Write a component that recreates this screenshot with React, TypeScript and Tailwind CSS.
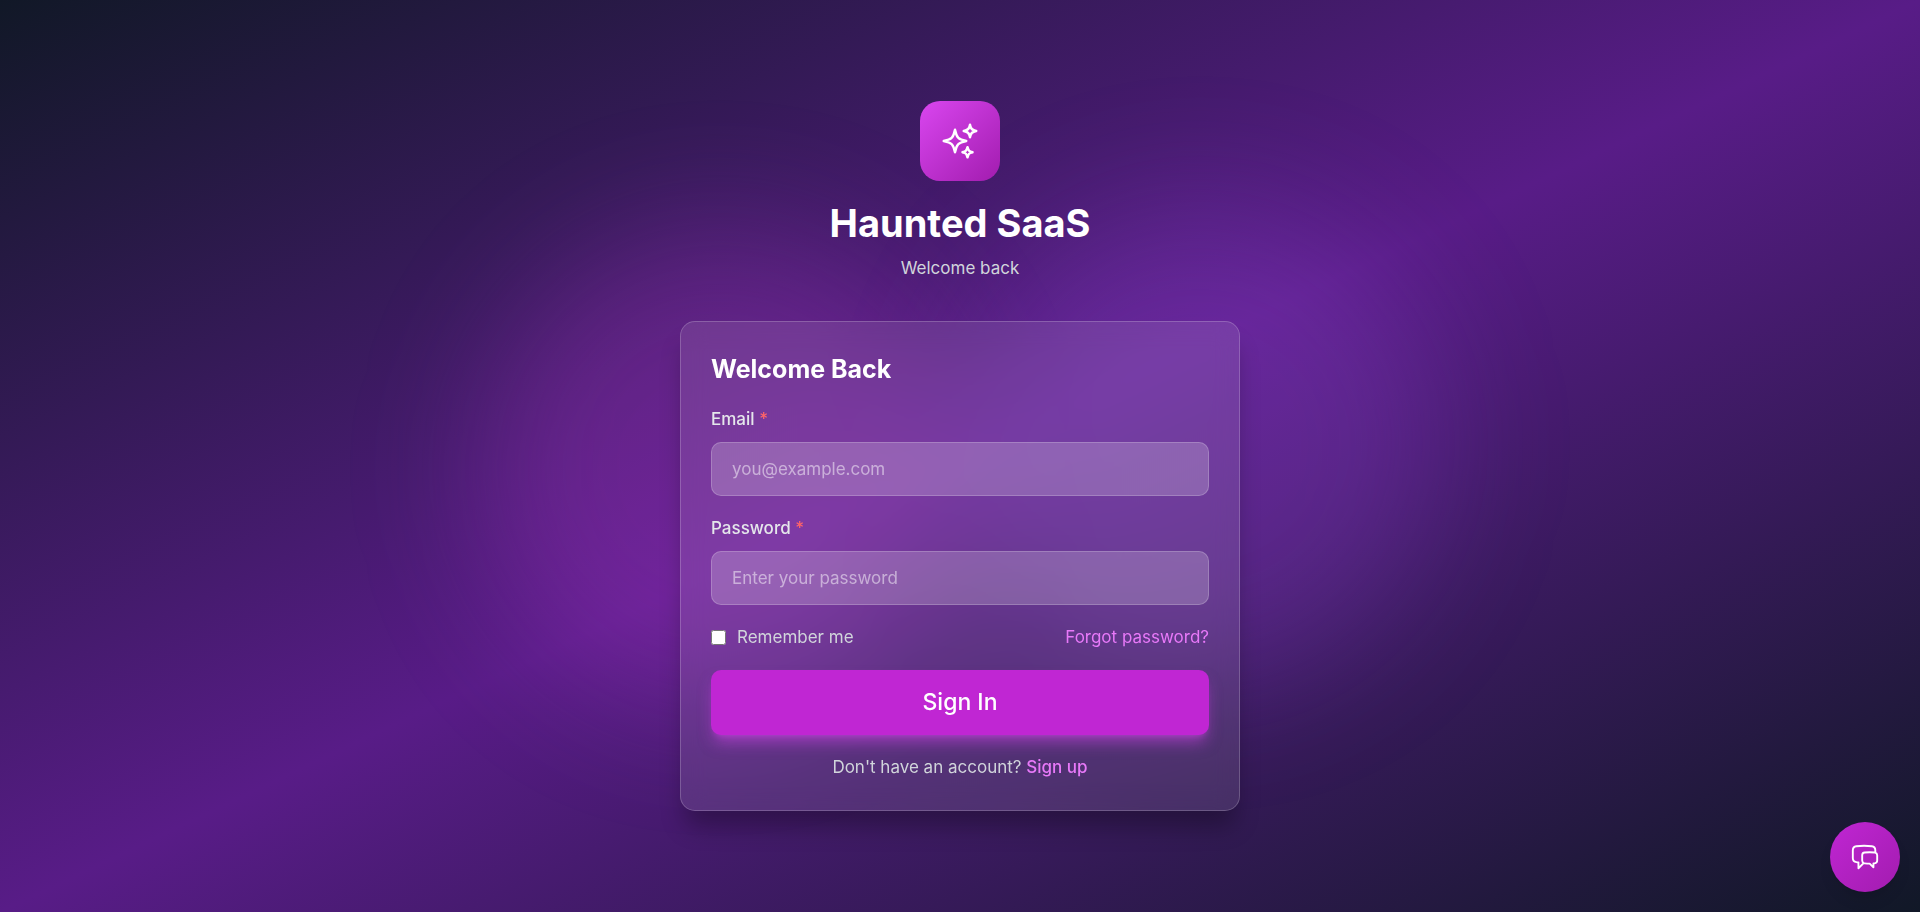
import { HiOutlineChatBubbleLeftRight, HiOutlineSparkles } from "react-icons/hi2";

type FieldProps = {
    id: string;
    label: string;
    type: string;
    placeholder: string;
};

function Field({ id, label, type, placeholder }: FieldProps) {
    return (
        <div className="flex flex-col gap-[10px]">
            <label
                htmlFor={id}
                className="text-[17px] font-medium leading-[25px] text-gray-200"
            >
                {label} <span className="text-red-400">*</span>
            </label>
            <input
                id={id}
                type={type}
                placeholder={placeholder}
                required
                className="h-[54px] w-full rounded-[10px] border border-white/20 bg-white/20 px-5 text-[17px] text-white outline-none placeholder:text-white/50"
            />
        </div>
    );
}

export default function App() {
    return (
        <main className="relative flex min-h-screen items-center justify-center overflow-hidden bg-linear-to-br/srgb from-[#111827] via-[#581c87] to-[#111827] p-5 font-['Inter',sans-serif]">
            <div className="pointer-events-none absolute inset-0">
                <div className="absolute left-1/4 top-1/4 size-[480px] rounded-full bg-[#d946ef]/20 blur-[64px]" />
                <div className="absolute bottom-1/4 right-1/4 size-[480px] rounded-full bg-[#a855f7]/20 blur-[64px]" />
            </div>

            <div className="relative w-full max-w-[560px]">
                <div className="mb-10 flex flex-col items-center text-center">
                    <div className="mb-5 flex size-20 items-center justify-center rounded-[20px] bg-linear-to-br/srgb from-[#d946ef] to-[#a21caf]">
                        <HiOutlineSparkles className="size-10 text-white" />
                    </div>
                    <h1 className="mb-[10px] text-[38px] font-bold leading-[45px] text-white">
                        Haunted SaaS
                    </h1>
                    <p className="text-[17px] leading-[25px] text-[#d1d5db]">
                        Welcome back
                    </p>
                </div>

                <div className="rounded-[15px] border border-white/20 bg-white/10 p-[30px] shadow-[0_20px_25px_-5px_rgb(0_0_0/0.3)] backdrop-blur-md">
                    <h2 className="mb-5 text-[25px] font-bold leading-[35px] text-white">
                        Welcome Back
                    </h2>
                    <form className="flex flex-col gap-5">
                        <Field
                            id="email"
                            label="Email"
                            type="email"
                            placeholder="you@example.com"
                        />
                        <Field
                            id="password"
                            label="Password"
                            type="password"
                            placeholder="Enter your password"
                        />
                        <div className="flex items-center justify-between text-[17px] leading-[25px]">
                            <label className="flex items-center text-[#d1d5db]">
                                <input
                                    type="checkbox"
                                    className="mr-[11px] size-[15px]"
                                />
                                Remember me
                            </label>
                            <a href="#forgot" className="text-[#e879f9]">
                                Forgot password?
                            </a>
                        </div>
                        <button
                            type="submit"
                            className="h-[65px] w-full rounded-[10px] bg-[#c026d3] text-[23px] font-medium text-white shadow-[0_10px_15px_-3px_rgb(217_70_239/0.5),0_4px_6px_-4px_rgb(217_70_239/0.5)]"
                        >
                            Sign In
                        </button>
                    </form>
                    <p className="mt-5 text-center text-[17px] leading-[25px] text-[#d1d5db]">
                        Don't have an account?{" "}
                        <a href="#signup" className="font-medium text-[#e879f9]">
                            Sign up
                        </a>
                    </p>
                </div>
            </div>

            <button
                type="button"
                aria-label="Open chat"
                className="fixed bottom-5 right-5 flex size-[70px] items-center justify-center rounded-full bg-linear-to-br/srgb from-[#c026d3] to-[#a21caf] text-white shadow-lg"
            >
                <HiOutlineChatBubbleLeftRight className="size-[30px]" />
            </button>
        </main>
    );
}
